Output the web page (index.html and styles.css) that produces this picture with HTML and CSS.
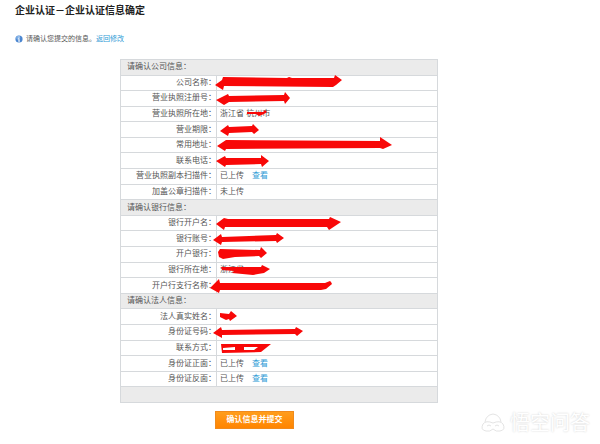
FILE: index.html
```html
<!DOCTYPE html>
<html lang="zh-CN">
<head>
    <meta charset="UTF-8">
    <meta name="viewport" content="width=device-width, initial-scale=1.0">
    <title>企业认证</title>
    <link rel="stylesheet" href="styles.css">
</head>
<body>
    <main class="page">
        <h1>企业认证－企业认证信息确定</h1>

        <p class="tip">
            <svg class="tip-icon" viewBox="0 0 10 10" aria-hidden="true">
                <circle cx="5" cy="5" r="4.5" fill="#4b86d0"/>
                <circle cx="4" cy="3.5" r="2.6" fill="#7eaee5"/>
                <path d="M5 2v1.2M4.2 4.5H5v3M4 7.7h2.2" stroke="#fff" stroke-width="1.2" fill="none"/>
            </svg>
            <span>请确认您提交的信息。</span>
            <a href="#">返回修改</a>
        </p>

        <form class="confirm" onsubmit="return false">
            <div class="sheet">
                <table>
                    <tbody>
                        <tr><th class="section" colspan="2">请确认公司信息：</th></tr>
                        <tr><th scope="row">公司名称：</th><td></td></tr>
                        <tr><th scope="row">营业执照注册号：</th><td></td></tr>
                        <tr><th scope="row">营业执照所在地：</th><td>浙江省 杭州市</td></tr>
                        <tr><th scope="row">营业期限：</th><td></td></tr>
                        <tr><th scope="row">常用地址：</th><td></td></tr>
                        <tr><th scope="row">联系电话：</th><td></td></tr>
                        <tr><th scope="row">营业执照副本扫描件：</th><td>已上传<a href="#">查看</a></td></tr>
                        <tr><th scope="row">加盖公章扫描件：</th><td>未上传</td></tr>
                    </tbody>
                    <tbody>
                        <tr><th class="section" colspan="2">请确认银行信息：</th></tr>
                        <tr><th scope="row">银行开户名：</th><td></td></tr>
                        <tr><th scope="row">银行账号：</th><td></td></tr>
                        <tr><th scope="row">开户银行：</th><td></td></tr>
                        <tr><th scope="row">银行所在地：</th><td>浙江省</td></tr>
                        <tr><th scope="row">开户行支行名称：</th><td></td></tr>
                    </tbody>
                    <tbody>
                        <tr><th class="section" colspan="2">请确认法人信息：</th></tr>
                        <tr><th scope="row">法人真实姓名：</th><td></td></tr>
                        <tr><th scope="row">身份证号码：</th><td></td></tr>
                        <tr><th scope="row">联系方式：</th><td></td></tr>
                        <tr><th scope="row">身份证正面：</th><td>已上传<a href="#">查看</a></td></tr>
                        <tr><th scope="row">身份证反面：</th><td>已上传<a href="#">查看</a></td></tr>
                        <tr><td class="section" colspan="2"></td></tr>
                    </tbody>
                </table>

                <!-- 红色涂抹，遮住敏感信息 -->
                <svg class="marks" viewBox="120 59 318 344" aria-hidden="true">
                    <path d="M215 85L222 80L223 77L287 78L289 77L292 78L334 78L335 75L342 80L336 85L333 87L224 86L223 90Z"/>
                    <path d="M216 100L228 94L229 96L284 95L285 92L290 98L285 104L284 101L229 102L224 105Z"/>
                    <path d="M247 112L263 112L265 110L267 112L264 114L259 116L256 114L247 114Z"/>
                    <path d="M220 131L228 125L229 127L252 126L253 124L259 130L254 134L252 132L229 133L228 136Z"/>
                    <path d="M217 146L226 140L380 141L380 137L392 145L383 149L380 148L226 149L225 151Z"/>
                    <path d="M216 161L225 156L226 158L261 158L261 155L269 161L262 167L261 164L226 165L225 167Z"/>
                    <path d="M216 224L224 218L228 219L329 219L330 217L341 222L329 230L327 227L225 227L224 230Z"/>
                    <path d="M213 240L221 234L222 237L276 235L277 233L284 238L277 243L276 241L222 242L221 245Z"/>
                    <path d="M218 252L220 249L260 250L261 247L267 253L261 258L259 256L235 257L223 259L219 257Z"/>
                    <path d="M221 267L250 267L261 267L262 265L270 269L264 273L258 274L253 275L232 273L234 271L222 270Z"/>
                    <path d="M210 288L219 279L220 283L325 283L330 281L331 282L332 284L326 289L321 290L220 290L219 293Z"/>
                    <path d="M220 313L229 314L231 311L237 316L230 321L229 319L226 320L220 317Z"/>
                    <path d="M213 333L221 327L222 330L295 329L296 327L303 331L297 336L295 334L222 335L222 338Z"/>
                    <path fill-rule="evenodd" d="M221 344L271 344L266 348L261 352L222 353Z M223 348L235 347L235 350L223 350Z M244 347L258 347L254 350L244 350Z"/>
                </svg>
            </div>

            <button type="submit">确认信息并提交</button>
        </form>

        <div class="watermark">
            <svg viewBox="0 0 26 22" aria-hidden="true">
                <path d="M5 10Q6 3 13 2Q20 3 21 10M3 12Q0 18 6 19Q10 20 13 17Q16 20 20 19Q26 18 23 12Q20 8 13 11Q6 8 3 12M7 14q2-2 4 0M15 14q2-2 4 0"/>
            </svg>
            <span>悟空问答</span>
        </div>
    </main>
</body>
</html>
```
FILE: styles.css
```css
:root {
    --line: #d6d9dc;
    --band: #ebebeb;
    --link: #2f9bd6;
}

* {
    box-sizing: border-box;
}

body {
    margin: 0;
    background: #fff;
    color: #555;
    font-family: "Liberation Sans", "Noto Sans CJK SC", sans-serif;
    font-size: 8px;
    line-height: 12px;
}

.page {
    position: relative;
    min-height: 100vh;
    padding: 4px 15px 0;
}

h1 {
    margin: 0;
    color: #222;
    font-size: 10px;
    line-height: 14px;
}

a {
    color: var(--link);
    text-decoration: none;
}

.tip {
    display: flex;
    align-items: center;
    margin: 15px 0 14px;
    font-size: 7px;
}

.tip-icon {
    width: 8px;
    height: 8px;
    margin-right: 3px;
}

/* 信息表 */
.confirm {
    width: 318px;
    max-width: 100%;
    margin-left: 105px;
}

.sheet {
    position: relative;
}

table {
    width: 100%;
    height: 344px;
    border-collapse: collapse;
    border: 1px solid var(--line);
}

tr {
    border-bottom: 1px solid var(--line);
}

th,
td {
    height: 15px;
    padding: 1px 3px;
    font-weight: normal;
    text-align: left;
}

th[scope="row"] {
    width: 96px;
    padding: 1px 0;
    border-right: 1px solid var(--line);
    text-align: right;
}

td a {
    margin-left: 8px;
}

.section {
    padding: 1px 6px;
    background: var(--band);
}

.marks {
    position: absolute;
    top: 0;
    left: 0;
    width: 318px;
    height: 344px;
    fill: #f80808;
    pointer-events: none;
}

button {
    display: block;
    width: 79px;
    height: 18px;
    margin: 8px 0 0 95px;
    padding: 0;
    border: 1px solid #f08a1c;
    background: linear-gradient(#ff9d1c, #ff8400);
    color: #fff;
    font: bold 8px/14px "Liberation Sans", "Noto Sans CJK SC", sans-serif;
}

/* 水印 */
.watermark {
    position: absolute;
    right: 10px;
    bottom: 9px;
    display: flex;
    align-items: center;
    gap: 4px;
    color: #fff;
    font-size: 20px;
    line-height: 24px;
    text-shadow: 0 0 2px #ccc;
}

.watermark svg {
    width: 26px;
    height: 22px;
    fill: none;
    stroke: #e4e4e4;
}
```
